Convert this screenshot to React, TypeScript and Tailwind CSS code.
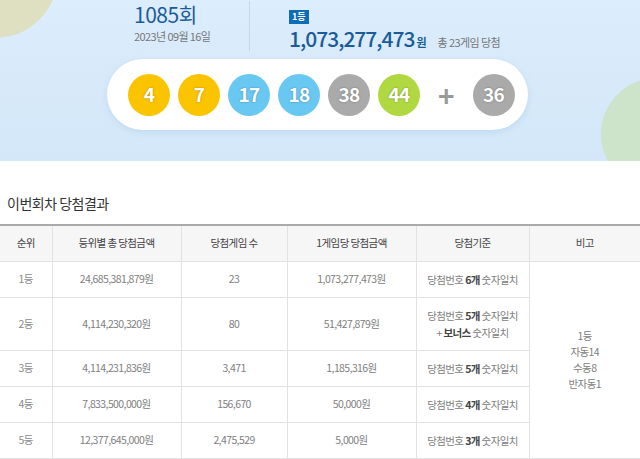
import React from 'react';

const balls: { n: number; color: string }[] = [
  { n: 4, color: 'bg-[#fbc400]' },
  { n: 7, color: 'bg-[#fbc400]' },
  { n: 17, color: 'bg-[#69c8f2]' },
  { n: 18, color: 'bg-[#69c8f2]' },
  { n: 38, color: 'bg-[#aaaaaa]' },
  { n: 44, color: 'bg-[#b0d840]' },
];

const rows = [
  { rank: '1등', total: '24,685,381,879원', count: '23', each: '1,073,277,473원', match: '6개', bonus: false },
  { rank: '2등', total: '4,114,230,320원', count: '80', each: '51,427,879원', match: '5개', bonus: true },
  { rank: '3등', total: '4,114,231,836원', count: '3,471', each: '1,185,316원', match: '5개', bonus: false },
  { rank: '4등', total: '7,833,500,000원', count: '156,670', each: '50,000원', match: '4개', bonus: false },
  { rank: '5등', total: '12,377,645,000원', count: '2,475,529', each: '5,000원', match: '3개', bonus: false },
];

const Ball: React.FC<{ n: number; color: string }> = ({ n, color }) => (
  <span
    className={`flex h-[42px] w-[42px] items-center justify-center rounded-full text-[19px] font-bold tracking-[-0.8px] text-white [text-shadow:0_0_2px_rgba(0,0,0,0.35)] ${color}`}
  >
    {n}
  </span>
);

export default function App() {
  return (
    <div className="relative h-[459px] w-[640px] overflow-hidden bg-white font-['Noto_Sans_CJK_KR','Noto_Sans',sans-serif]">
      {/* banner */}
      <div className="relative h-[161px] overflow-hidden bg-gradient-to-b from-[#dcedfc] to-[#d3e7f8]">
        <div className="absolute left-[-68px] top-[-88px] h-[126px] w-[126px] rounded-full bg-[#dfe0c2]" />
        <div className="absolute left-[601px] top-[78px] h-[112px] w-[112px] rounded-full bg-[#cde4cb]" />

        <div className="relative flex pl-[134px] pt-[1px]">
          <div className="w-[116px] border-r border-[#c5d7e8] pr-2">
            <div className="text-[21px] leading-[26px] tracking-[-0.5px] text-[#1b5c98]">
              1085<span className="text-[20px]">회</span>
            </div>
            <div className="mt-[1px] text-[11px] leading-[14px] tracking-[-0.6px] text-[#777]">2023년 09월 16일</div>
          </div>
          <div className="pl-[39px]">
            <span className="mt-[2px] inline-block bg-[#0f6cb6] px-[3px] text-[9px] font-bold leading-[14px] text-white">1등</span>
            <div className="flex items-baseline">
              <span className="text-[21px] font-medium leading-[26px] tracking-[-1px] text-[#1b5c98]">1,073,277,473</span>
              <span className="ml-[2px] text-[11px] font-bold text-[#1b5c98]">원</span>
              <span className="ml-[11px] text-[11px] tracking-[-0.6px] text-[#777]">총 23게임 당첨</span>
            </div>
          </div>
        </div>

        <div className="relative ml-[107px] mt-[8px] flex h-[71px] w-[421px] items-center gap-[8px] rounded-full bg-white pl-[21px] shadow-[0_2px_6px_rgba(150,190,225,0.35)]">
          {balls.map(b => (
            <Ball key={b.n} n={b.n} color={b.color} />
          ))}
          <span className="mx-[10px] text-[28px] font-bold leading-none text-[#999]">+</span>
          <Ball n={36} color="bg-[#aaaaaa]" />
        </div>
      </div>

      {/* results */}
      <h3 className="mt-[32px] pl-[7px] text-[14px] leading-[20px] tracking-[-0.5px] text-[#333]">이번회차 당첨결과</h3>

      <table className="mt-[11px] w-[640px] table-fixed border-collapse text-center text-[10.5px] tracking-[-0.6px]">
        <colgroup>
          <col className="w-[52px]" />
          <col className="w-[129px]" />
          <col className="w-[106px]" />
          <col className="w-[129px]" />
          <col className="w-[113px]" />
          <col className="w-[111px]" />
        </colgroup>
        <thead>
          <tr className="h-[36px] border-t-2 border-[#aaaaaa] bg-[#f6f6f6] text-[#444]">
            {['순위', '등위별 총 당첨금액', '당첨게임 수', '1게임당 당첨금액', '당첨기준', '비고'].map((h, i) => (
              <th key={h} className={`border-b border-[#e2e2e2] font-normal ${i > 0 ? 'border-l' : ''}`}>
                {h}
              </th>
            ))}
          </tr>
        </thead>
        <tbody className="text-[#808080]">
          {rows.map((r, i) => (
            <tr key={r.rank} className={r.bonus ? 'h-[53px]' : 'h-[36px]'}>
              <td className="border-b border-[#e2e2e2] text-[#8a8a8a]">{r.rank}</td>
              <td className="border-b border-l border-[#e2e2e2]">{r.total}</td>
              <td className="border-b border-l border-[#e2e2e2]">{r.count}</td>
              <td className="border-b border-l border-[#e2e2e2]">{r.each}</td>
              <td className="border-b border-l border-[#e2e2e2] leading-[17px]">
                당첨번호 <b className="font-bold text-[#444]">{r.match}</b> 숫자일치
                {r.bonus && (
                  <>
                    <br />+ <b className="font-bold text-[#444]">보너스</b> 숫자일치
                  </>
                )}
              </td>
              {i === 0 && (
                <td rowSpan={5} className="border-b border-l border-[#e2e2e2] leading-[16px]">
                  1등
                  <br />
                  자동14
                  <br />
                  수동8
                  <br />
                  반자동1
                </td>
              )}
            </tr>
          ))}
        </tbody>
      </table>
    </div>
  );
}
